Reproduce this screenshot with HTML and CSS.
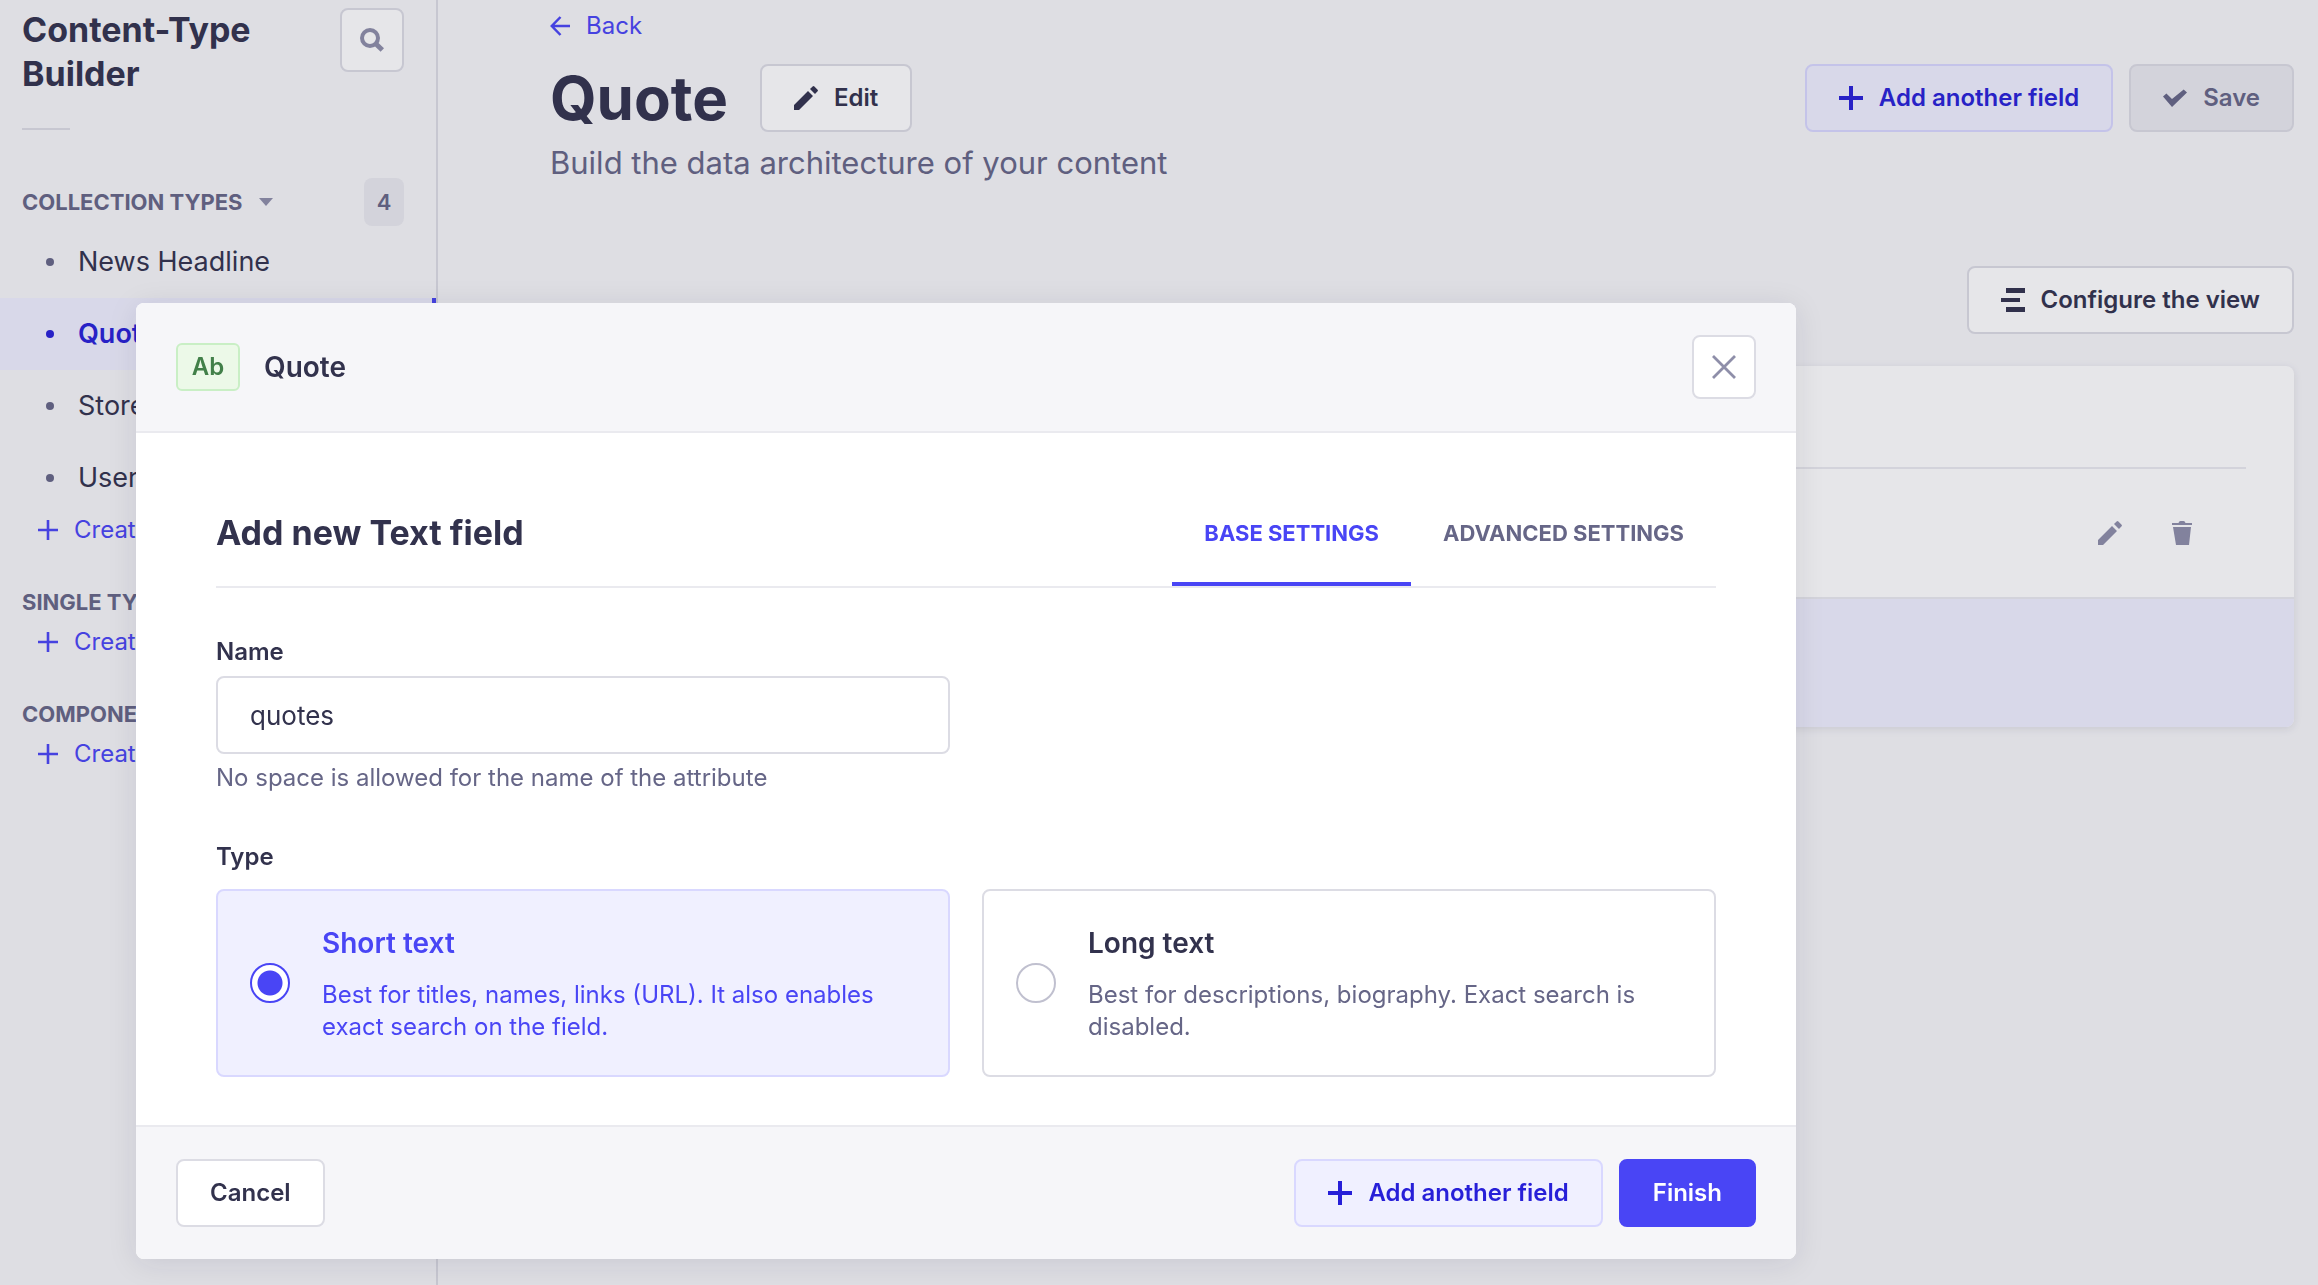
FILE: index.html
```html
<!DOCTYPE html>
<html lang="en">
<head>
<meta charset="utf-8">
<title>Content-Type Builder</title>
<link rel="stylesheet" href="styles.css">
</head>
<body>
<svg class="sprite" aria-hidden="true">
  <symbol id="plus" viewBox="0 0 24 24"><path d="M10 0h4v10h10v4H14v10h-4V14H0v-4h10z"/></symbol>
  <symbol id="plus-thin" viewBox="0 0 20 20"><path d="M8.7 0h2.6v8.7H20v2.6h-8.7V20H8.7v-8.7H0V8.7h8.7z"/></symbol>
  <symbol id="pencil" viewBox="0 0 24 24"><path d="M14 5l5 5L5 24H0v-5zM18.600 .5q.9-.8 1.800 0l3.200 3.200q.7.800 0 1.600L21 8l-5-5z"/></symbol>
  <symbol id="trash" viewBox="0 0 24 24"><path d="M2 2h6.500q.5-2 2-2h3q1.500 0 2 2H22v2H2zM3 6h18l-2 18H6z"/></symbol>
  <symbol id="check" viewBox="0 0 24 24"><path d="M0 10.600L3.400 7.400L9 13L20.700 3.500L24 6.500L9 21z"/></symbol>
  <symbol id="sliders" viewBox="0 0 24 24"><path d="M5 0h19v5H5zM0 10h19v4H0zM5 19h19v5H5z"/></symbol>
  <symbol id="search" viewBox="0 0 24 24"><path fill="none" stroke="currentColor" stroke-width="4" d="M18 10a8 8 0 1 1-16 0a8 8 0 1 1 16 0z"/><path fill="none" stroke="currentColor" stroke-width="5" d="M15.500 15.500l6.800 6.500"/></symbol>
  <symbol id="cross" viewBox="0 0 24 24"><path fill="none" stroke="currentColor" stroke-width="2.800" d="M1 1l22 22M23 1L1 23"/></symbol>
  <symbol id="arrow-left" viewBox="0 0 20 20"><path fill="none" stroke="currentColor" stroke-width="2.500" d="M20 10H2M10.500 1L1.800 10l8.700 9"/></symbol>
</svg>

<div class="app">
  <nav class="sidebar" aria-label="Content-Type Builder">
    <div class="sidebar-head">
      <h2 class="heading">Content-Type Builder</h2>
      <button class="icon-box" type="button" aria-label="Search"><svg class="icon"><use href="#search"/></svg></button>
    </div>
    <div class="short-rule"></div>

    <section class="nav-section">
      <div class="nav-title">
        <button class="nav-toggle caps" type="button">Collection Types <svg class="caret" viewBox="0 0 14 8"><path d="M0 0h14L7 8z"/></svg></button>
        <span class="count">4</span>
      </div>
      <ul class="nav-list">
        <li><a class="nav-link" href="#news">News Headline</a></li>
        <li><a class="nav-link active" href="#quote">Quote</a></li>
        <li><a class="nav-link" href="#store">Store</a></li>
        <li><a class="nav-link" href="#user">User</a></li>
      </ul>
      <a class="create" href="#new-collection"><svg class="icon-small"><use href="#plus-thin"/></svg>Create new</a>
    </section>
    <section class="nav-section">
      <div class="nav-title caps">Single Types</div>
      <a class="create" href="#new-single"><svg class="icon-small"><use href="#plus-thin"/></svg>Create new</a>
    </section>
    <section class="nav-section">
      <div class="nav-title caps">Components</div>
      <a class="create" href="#new-component"><svg class="icon-small"><use href="#plus-thin"/></svg>Create new</a>
    </section>
  </nav>

  <main class="main">
    <a class="back" href="#back"><svg class="icon-small"><use href="#arrow-left"/></svg>Back</a>
    <div class="title-row">
      <h1 class="title">Quote</h1>
      <button class="btn" type="button"><svg class="icon"><use href="#pencil"/></svg>Edit</button>
      <div class="actions">
        <button class="btn btn-secondary" type="button"><svg class="icon"><use href="#plus"/></svg>Add another field</button>
        <button class="btn btn-muted" type="button" disabled><svg class="icon"><use href="#check"/></svg>Save</button>
      </div>
    </div>
    <p class="subtitle">Build the data architecture of your content</p>
    <div class="toolbar">
      <button class="btn" type="button"><svg class="icon"><use href="#sliders"/></svg>Configure the view</button>
    </div>
    <div class="card">
      <div class="card-inner">
        <table class="fields">
          <thead><tr><th></th></tr></thead>
          <tbody><tr><td>
            <div class="row-actions">
              <button class="ghost" type="button" aria-label="Edit"><svg class="icon"><use href="#pencil"/></svg></button>
              <button class="ghost" type="button" aria-label="Delete"><svg class="icon"><use href="#trash"/></svg></button>
            </div>
          </td></tr></tbody>
        </table>
      </div>
      <div class="card-foot"></div>
    </div>
  </main>
</div>

<div class="overlay">
  <div class="modal" role="dialog" aria-modal="true" aria-labelledby="modal-name">
    <header class="modal-head">
      <span class="tag">Ab</span>
      <h2 class="modal-name" id="modal-name">Quote</h2>
      <button class="icon-box close" type="button" aria-label="Close"><svg class="icon"><use href="#cross"/></svg></button>
    </header>
    <form class="modal-body">
      <div class="tab-row">
        <h2 class="heading">Add new Text field</h2>
        <div class="tabs" role="tablist">
          <button class="tab caps selected" type="button" role="tab" aria-selected="true">Base settings</button>
          <button class="tab caps" type="button" role="tab" aria-selected="false">Advanced settings</button>
        </div>
      </div>
      <div class="grid">
        <div class="field">
          <label class="label" for="name">Name</label>
          <input class="input" id="name" type="text" value="quotes">
          <p class="hint">No space is allowed for the name of the attribute</p>
        </div>
      </div>
      <fieldset class="types">
        <legend class="label">Type</legend>
        <div class="grid">
          <label class="option chosen">
            <input class="radio" type="radio" name="type" checked>
            <span class="option-text"><span class="option-title">Short text</span><span class="option-desc">Best for titles, names, links (URL). It also enables exact search on the field.</span></span>
          </label>
          <label class="option">
            <input class="radio" type="radio" name="type">
            <span class="option-text"><span class="option-title">Long text</span><span class="option-desc">Best for descriptions, biography. Exact search is disabled.</span></span>
          </label>
        </div>
      </fieldset>
    </form>
    <footer class="modal-foot">
      <button class="btn" type="button">Cancel</button>
      <div class="actions">
        <button class="btn btn-secondary" type="button"><svg class="icon"><use href="#plus"/></svg>Add another field</button>
        <button class="btn btn-primary" type="submit">Finish</button>
      </div>
    </footer>
  </div>
</div>
</body>
</html>
```
FILE: styles.css
```css
:root {
  --ink: #32324d;
  --text: #666687;
  --soft: #8e8ea9;
  --line: #dcdce4;
  --line-light: #eaeaef;
  --canvas: #f6f6f9;
  --primary: #4945f5;
  --primary-dark: #271fd8;
  --primary-tint: #f0f0ff;
  --primary-line: #d9d8ff;
}

* { box-sizing: border-box; }

body {
  margin: 0;
  background: var(--canvas);
  color: var(--ink);
  font-family: Inter, "Liberation Sans", sans-serif;
  font-size: 24px;
  line-height: 32px;
  overflow: hidden;
}

h1, h2, p, ul, fieldset { margin: 0; padding: 0; border: 0; }
button, input { font: inherit; color: inherit; }
button { cursor: pointer; }
a { text-decoration: none; color: inherit; }
svg { fill: currentColor; flex: none; display: block; }

.sprite { position: absolute; width: 0; height: 0; }
.icon { width: 24px; height: 24px; }
.icon-small { width: 20px; height: 20px; }
.heading { font-size: 34px; line-height: 44px; font-weight: 700; }
.caps { font-size: 22px; font-weight: 700; text-transform: uppercase; color: var(--text); }

.app { display: flex; min-height: 100vh; }

/* Sidebar */
.sidebar { width: 438px; flex: none; padding-top: 8px; border-right: 2px solid var(--line); }
.sidebar-head { display: flex; justify-content: space-between; align-items: flex-start; padding: 0 32px 0 22px; }
.sidebar-head .heading { width: 260px; }
.icon-box {
  display: flex; align-items: center; justify-content: center;
  width: 64px; height: 64px; padding: 0;
  background: #fff; color: var(--soft);
  border: 2px solid var(--line); border-radius: 8px;
}
.short-rule { width: 48px; height: 2px; margin: 32px 0 48px 22px; background: var(--line); }
.nav-section { margin-bottom: 32px; }
.nav-title { display: flex; align-items: center; justify-content: space-between; height: 48px; padding: 0 32px 0 22px; }
.nav-toggle { display: flex; align-items: center; gap: 16px; padding: 0; border: 0; background: none; }
.caret { width: 14px; height: 8px; color: var(--soft); }
.count {
  width: 40px; height: 48px; border-radius: 8px; background: var(--line-light);
  color: var(--text); font-size: 22px; font-weight: 600; line-height: 48px; text-align: center;
}
.nav-list { list-style: none; }
.nav-link { display: flex; align-items: center; gap: 24px; height: 72px; padding-left: 46px; font-size: 27px; }
.nav-link::before { content: ""; width: 8px; height: 8px; border-radius: 50%; background: var(--text); }
.nav-link.active { background: var(--primary-tint); color: var(--primary-dark); font-weight: 600; border-right: 4px solid var(--primary); }
.nav-link.active::before { background: var(--primary-dark); }
.create { display: flex; align-items: center; gap: 16px; padding-left: 38px; color: var(--primary); white-space: nowrap; }

/* Page */
.main { flex: 1; padding: 10px 24px 0 112px; }
.back { display: flex; align-items: center; gap: 16px; width: max-content; color: var(--primary); }
.title-row { display: flex; align-items: center; margin-top: 22px; gap: 32px; }
.title { font-size: 60px; line-height: 68px; font-weight: 700; }
.actions { display: flex; gap: 16px; margin-left: auto; }
.subtitle { margin-top: 8px; font-size: 31px; line-height: 46px; color: var(--text); }
.toolbar { display: flex; justify-content: flex-end; margin: 80px 0 32px; }

.btn {
  display: flex; align-items: center; gap: 16px; height: 68px; padding: 0 32px;
  background: #fff; border: 2px solid var(--line); border-radius: 8px;
  font-weight: 600; white-space: nowrap;
}
.btn-secondary { background: var(--primary-tint); border-color: var(--primary-line); color: var(--primary-dark); }
.btn-muted { background: var(--line-light); color: var(--text); }
.btn-primary { background: var(--primary); border-color: var(--primary); color: #fff; }

.card { background: #fff; border-radius: 8px; box-shadow: 0 2px 8px rgba(33, 33, 52, .1); overflow: hidden; }
.card-inner { padding: 0 48px; }
.fields { width: 100%; border-collapse: separate; border-spacing: 0; }
.fields th { height: 103px; padding: 0; border-bottom: 2px solid var(--line-light); }
.fields td { height: 128px; padding: 0 32px; }
.row-actions { display: flex; justify-content: flex-end; gap: 8px; }
.ghost { display: flex; align-items: center; justify-content: center; width: 64px; height: 64px; padding: 0; border: 0; background: none; color: var(--soft); }
.card-foot { height: 130px; border-top: 2px solid var(--line-light); background: var(--primary-tint); }

/* Modal */
.overlay { position: fixed; inset: 0; padding: 303px 522px 0 136px; background: rgba(50, 50, 77, .12); }
.modal { background: #fff; border-radius: 8px; box-shadow: 0 4px 30px rgba(33, 33, 52, .1); overflow: hidden; }
.modal-head { display: flex; align-items: center; gap: 24px; padding: 32px 40px; background: var(--canvas); border-bottom: 2px solid var(--line-light); }
.tag {
  width: 64px; height: 48px; border: 2px solid #c9efc5; border-radius: 6px; background: #ecf9e8;
  color: #428049; font-size: 24px; font-weight: 600; line-height: 44px; text-align: center;
}
.modal-name { font-size: 28px; line-height: 40px; font-weight: 600; }
.close { margin-left: auto; }
.modal-body { padding: 52px 80px 48px; }
.tab-row { display: flex; align-items: center; justify-content: space-between; border-bottom: 2px solid var(--line-light); }
.tab-row .heading { padding-bottom: 6px; }
.tabs { display: flex; }
.tab { padding: 32px; border: 0; border-bottom: 4px solid transparent; background: none; line-height: 33px; }
.tab.selected { color: var(--primary); border-color: var(--primary); }
.grid { display: grid; grid-template-columns: 1fr 1fr; gap: 32px; }
.tab-row + .grid { margin-top: 48px; }
.field { display: flex; flex-direction: column; gap: 8px; }
.label { display: block; padding: 0; font-weight: 600; }
.input { width: 100%; height: 78px; padding: 0 32px; border: 2px solid var(--line); border-radius: 8px; background: #fff; font-size: 26px; }
.hint { color: var(--text); line-height: 31px; }
.types { margin-top: 48px; min-width: 0; }
.types .grid { margin-top: 16px; }
.option { display: flex; align-items: center; gap: 32px; padding: 32px; border: 2px solid var(--line); border-radius: 8px; color: var(--text); }
.option-text { display: flex; flex-direction: column; gap: 16px; }
.option-title { font-size: 28px; line-height: 40px; font-weight: 600; color: var(--ink); }
.chosen, .chosen .option-title { color: var(--primary); }
.chosen { background: var(--primary-tint); border-color: var(--primary-line); }
.radio { appearance: none; flex: none; width: 40px; height: 40px; margin: 0; border: 2px solid #c0c0cf; border-radius: 50%; background: #fff; }
.radio:checked { border-color: var(--primary); background: radial-gradient(circle, var(--primary) 12px, #fff 13px); }
.modal-foot { display: flex; padding: 32px 40px; background: var(--canvas); border-top: 2px solid var(--line-light); }
```
